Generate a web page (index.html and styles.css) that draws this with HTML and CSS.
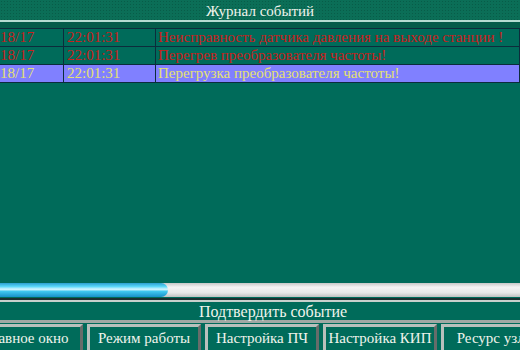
FILE: index.html
```html
<!DOCTYPE html>
<html>
<head>
  <title>Журнал событий</title>
  <link rel="stylesheet" href="styles.css">
</head>
<body>
  <div class="screen">
    <div class="header">Журнал событий</div>

    <div class="log">
      <table class="events">
        <tr class="alarm">
          <td class="date">18/17</td>
          <td class="time">22:01:31</td>
          <td class="msg">Неисправность датчика давления на выходе станции !</td>
        </tr>
        <tr class="alarm">
          <td class="date">18/17</td>
          <td class="time">22:01:31</td>
          <td class="msg">Перегрев преобразователя частоты!</td>
        </tr>
        <tr class="selected">
          <td class="date">18/17</td>
          <td class="time">22:01:31</td>
          <td class="msg">Перегрузка преобразователя частоты!</td>
        </tr>
      </table>
    </div>

    <div class="scrollbar">
      <div class="thumb" style="width: 168px"></div>
    </div>

    <div class="confirm">Подтвердить событие</div>

    <div class="nav">
      <div class="nav-btn">Главное окно</div>
      <div class="nav-btn">Режим работы</div>
      <div class="nav-btn">Настройка ПЧ</div>
      <div class="nav-btn">Настройка КИП</div>
      <div class="nav-btn">Ресурс узлов</div>
    </div>
  </div>
</body>
</html>
```

FILE: styles.css
```css
body {
  margin: 0;
  padding: 0;
  background-color: #006b5a;
  font-family: "Liberation Serif", "DejaVu Serif", serif;
}

.screen {
  width: 520px;
  height: 350px;
  overflow: hidden;
  display: flex;
  flex-direction: column;
  background-color: #006b5a;
}

.header {
  height: 20px;
  line-height: 22px;
  text-align: center;
  font-size: 15px;
  color: #f0f4ec;
  background-color: #0b6e57;
  background-image: radial-gradient(rgba(0, 40, 30, 0.25) 1px, transparent 1px);
  background-size: 3px 3px;
  border-bottom: 2px solid #b4dcd2;
}

.log {
  flex: 1;
  padding-top: 6px;
  background: linear-gradient(#045c4a 0, #045c4a 6px, #006b5a 6px);
}

.events {
  border-collapse: collapse;
  width: 100%;
  table-layout: fixed;
  font-size: 15px;
}

.events td {
  height: 17px;
  padding: 0 2px;
  line-height: 17px;
  border: 1px solid #0c2c3c;
  white-space: nowrap;
  overflow: hidden;
}

.events td.date {
  width: 63px;
  padding: 0;
  border-left: none;
}

.events td.time {
  width: 86px;
  padding-left: 3px;
}

.alarm {
  color: #c8201c;
}

.selected {
  background-color: #8080ff;
  color: #e4e070;
}

.scrollbar {
  height: 14px;
  margin-bottom: 3px;
  background: linear-gradient(#c8c8c8, #f4f4f4 30%, #e8e8e8 70%, #c0c0c0);
}

.thumb {
  height: 14px;
  border-radius: 0 7px 7px 0;
  background: linear-gradient(#2aa0d0, #5ad8f8 25%, #d8f8ff 45%, #40c8f0 60%, #1890c8);
}

.confirm {
  height: 18px;
  padding-left: 26px;
  line-height: 19px;
  text-align: center;
  font-size: 16px;
  color: #f0f4ec;
  background-color: #006b5a;
  border-top: 2px solid #c8d0cc;
  box-shadow: 0 -2px 0 #1c3030;
  border-bottom: 3px solid #a0a8a4;
}

.nav {
  display: flex;
  gap: 4px;
  margin-left: -31px;
  padding-top: 1px;
}

.nav-btn {
  box-sizing: border-box;
  flex: 0 0 114px;
  height: 26px;
  line-height: 22px;
  text-align: center;
  font-size: 15px;
  color: #f0f4ec;
  white-space: nowrap;
  overflow: hidden;
  background-color: #006b5a;
  border: 3px outset #b8c0bc;
  border-bottom: none;
}
```
